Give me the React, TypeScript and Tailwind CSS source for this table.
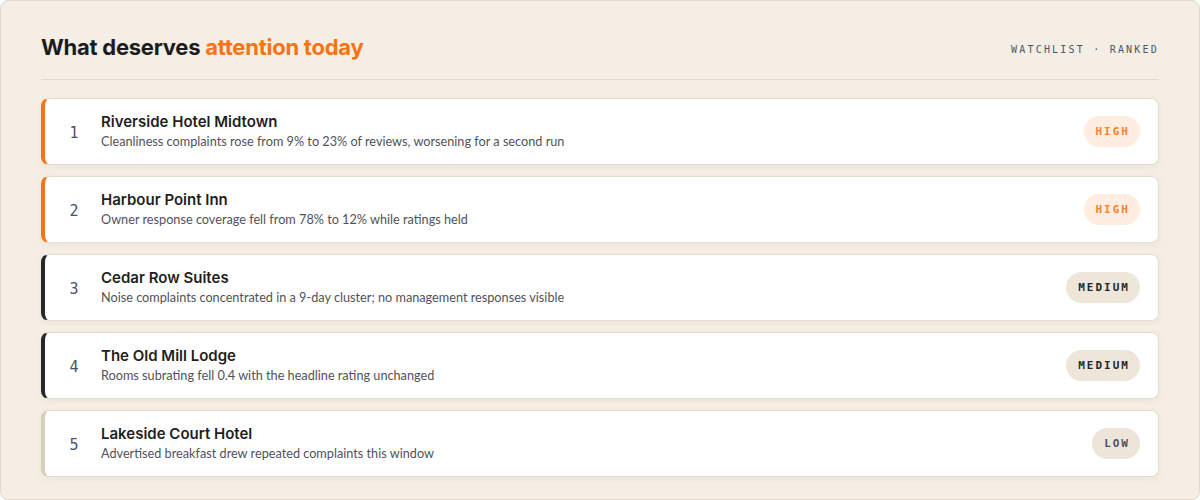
import React from 'react';

type Level = 'HIGH' | 'MEDIUM' | 'LOW';

const items: { name: string; note: string; level: Level }[] = [
  { name: 'Riverside Hotel Midtown', note: 'Cleanliness complaints rose from 9% to 23% of reviews, worsening for a second run', level: 'HIGH' },
  { name: 'Harbour Point Inn', note: 'Owner response coverage fell from 78% to 12% while ratings held', level: 'HIGH' },
  { name: 'Cedar Row Suites', note: 'Noise complaints concentrated in a 9-day cluster; no management responses visible', level: 'MEDIUM' },
  { name: 'The Old Mill Lodge', note: 'Rooms subrating fell 0.4 with the headline rating unchanged', level: 'MEDIUM' },
  { name: 'Lakeside Court Hotel', note: 'Advertised breakfast drew repeated complaints this window', level: 'LOW' },
];

const accent: Record<Level, string> = {
  HIGH: 'border-l-[#f97316]',
  MEDIUM: 'border-l-[#27272a]',
  LOW: 'border-l-[#d8cfbd]',
};

const badge: Record<Level, string> = {
  HIGH: 'bg-[#feede0] text-[#f7822f]',
  MEDIUM: 'bg-[#efe6da] text-[#27272a]',
  LOW: 'bg-[#ede5d9] text-[#4b5263]',
};

const mono = "font-['DejaVu_Sans_Mono','Liberation_Mono',monospace]";

const App = () => {
  return (
    <div className="w-[1200px] h-[500px] bg-white font-['Inter',sans-serif]">
      <div className="h-full rounded-lg border border-[#e3dacd] bg-[#f5eee4] px-10 pt-[31px]">
        {/* Header */}
        <div className="flex items-center justify-between border-b border-[#e2d9cc] pb-[17px]">
          <h1 className="text-[22px] leading-[30px] font-bold tracking-[-0.25px] text-[#1c1c1e]">
            What deserves <span className="text-[#f97316]">attention today</span>
          </h1>
          <span className={`${mono} text-[10px] tracking-[2.2px] text-[#4f5566] pt-1`}>WATCHLIST · RANKED</span>
        </div>

        {/* Ranked list */}
        <div className="mt-[18px] flex flex-col gap-[11px]">
          {items.map((item, i) => (
            <div
              key={i}
              className={`flex h-[67px] items-center rounded-lg border border-[#e6ded2] border-l-4 ${accent[item.level]} bg-white pr-[18px] shadow-[0_2px_6px_rgba(120,100,70,0.08)]`}
            >
              <div className={`${mono} w-[56px] pl-[2px] pt-[3px] text-center text-[15px] text-[#4b5263]`}>{i + 1}</div>
              <div className="flex-1">
                <div className="text-[15px] leading-[20px] font-semibold text-[#1f1f22]">{item.name}</div>
                <div className="font-['Lato',sans-serif] text-[12.7px] leading-[19px] text-[#52525b]">{item.note}</div>
              </div>
              <span className={`${mono} ${badge[item.level]} rounded-full px-3 pr-[10px] pt-[2px] h-[31px] flex items-center text-[11px] font-bold tracking-[2px]`}>
                {item.level}
              </span>
            </div>
          ))}
        </div>
      </div>
    </div>
  );
};

export default App;
